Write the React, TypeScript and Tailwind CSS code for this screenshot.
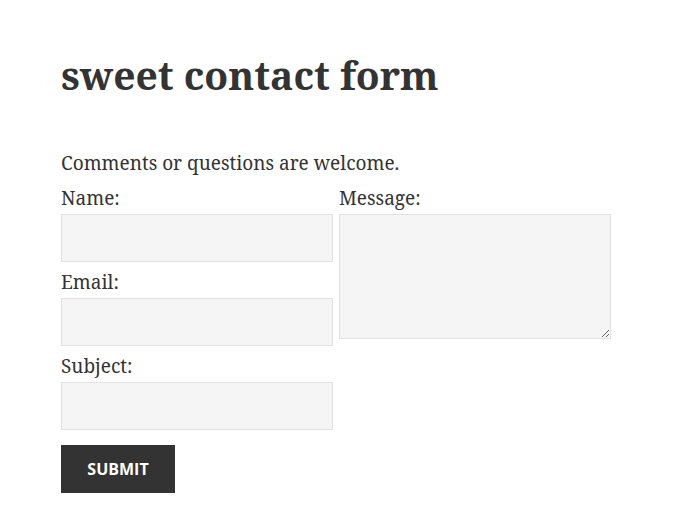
import React from "react";

const serif = { fontFamily: '"Noto Serif", "DejaVu Serif", serif' };

export default function App() {
  return (
    <div className="min-h-[510px] w-[696px] bg-white text-[#333333]" style={serif}>
      <div className="pl-[61px] pt-[50px]">
        <h1 className="text-[39px] font-bold leading-[50px] m-0">sweet contact form</h1>
        <p className="mt-[50px] text-[19px] leading-[27px]">Comments or questions are welcome.</p>
        <div className="flex gap-[6px] mt-[1px]">
          <div className="flex w-[272px] flex-col">
            <label className="h-[36px] pt-[7px] text-[19px] leading-[27px]">Name:</label>
            <input className="h-[48px] w-[272px] border border-[#e1e1e1] bg-[#f5f5f5] outline-none" />
            <label className="h-[36px] pt-[7px] text-[19px] leading-[27px]">Email:</label>
            <input className="h-[48px] w-[272px] border border-[#e1e1e1] bg-[#f5f5f5] outline-none" />
            <label className="h-[36px] pt-[7px] text-[19px] leading-[27px]">Subject:</label>
            <input className="h-[48px] w-[272px] border border-[#e1e1e1] bg-[#f5f5f5] outline-none" />
            <button
              className="mt-[15px] h-[48px] w-[114px] bg-[#333333] text-[16px] font-bold text-white uppercase"
              style={{ fontFamily: '"Open Sans", "Noto Sans", sans-serif' }}
            >
              Submit
            </button>
          </div>
          <div className="flex w-[272px] flex-col">
            <label className="h-[36px] pt-[7px] text-[19px] leading-[27px]">Message:</label>
            <textarea className="h-[125px] w-[272px] border border-[#e1e1e1] bg-[#f5f5f5] outline-none" />
          </div>
        </div>
      </div>
    </div>
  );
}
